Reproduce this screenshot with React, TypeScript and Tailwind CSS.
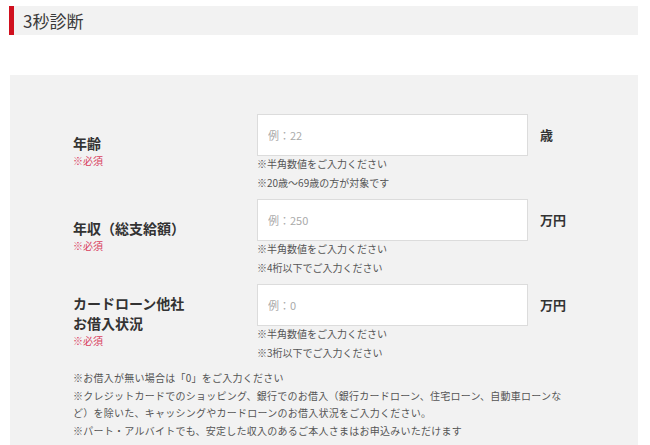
import React from "react";

type Row = {
  label: string[];
  placeholder: string;
  unit: string;
  notes: string[];
};

const rows: Row[] = [
  {
    label: ["年齢"],
    placeholder: "例：22",
    unit: "歳",
    notes: ["※半角数値をご入力ください", "※20歳～69歳の方が対象です"],
  },
  {
    label: ["年収（総支給額）"],
    placeholder: "例：250",
    unit: "万円",
    notes: ["※半角数値をご入力ください", "※4桁以下でご入力ください"],
  },
  {
    label: ["カードローン他社", "お借入状況"],
    placeholder: "例：0",
    unit: "万円",
    notes: ["※半角数値をご入力ください", "※3桁以下でご入力ください"],
  },
];

export default function App() {
  return (
    <div className="h-[445px] w-[650px] overflow-hidden bg-white font-['Noto_Sans_CJK_JP','Noto_Sans',sans-serif] text-[#333]">
      <div className="pl-[9px] pr-[12px] pt-[6px]">
        <h2 className="flex h-[29px] items-center border-l-[5px] border-[#d0101e] bg-[#f2f2f2] pl-[9px] text-[17px] font-normal text-[#3a3a3a]">
          3秒診断
        </h2>
      </div>

      <div className="ml-[10px] mr-[12px] mt-[40px] h-[400px] bg-[#f2f2f2] pl-[63px] pt-[39px]">
        <div className="flex flex-col gap-[5px]">
          {rows.map((r, i) => (
            <div key={i} className="flex items-center">
              <div className="w-[184px] pb-[7px]">
                <div className="text-[14px] font-bold leading-[20px] text-[#333]">
                  {r.label.map((l, j) => (
                    <div key={j}>{l}</div>
                  ))}
                </div>
                <div className="text-[10px] leading-[16px] text-[#d9405e]">※必須</div>
              </div>
              <div>
                <div className="flex items-center">
                  <input
                    readOnly
                    placeholder={r.placeholder}
                    className="h-[42px] w-[271px] border border-[#dcdcdc] bg-white px-[10px] text-[11px] text-[#333] outline-none placeholder:text-[#aaaaaa]"
                  />
                  <span className="ml-[12px] text-[13px] font-bold text-[#333]">{r.unit}</span>
                </div>
                <div className="-mt-[2px] mb-[2px] text-[10px] leading-[19px] text-[#555]">
                  {r.notes.map((n, j) => (
                    <div key={j}>{n}</div>
                  ))}
                </div>
              </div>
            </div>
          ))}
        </div>

        <div className="mt-[5px] w-[510px] text-[10px] leading-[17.5px] tracking-[0.25px] text-[#555]">
          <p>※お借入が無い場合は「0」をご入力ください</p>
          <p>
            ※クレジットカードでのショッピング、銀行でのお借入（銀行カードローン、住宅ローン、自動車ローンな
            <br />
            ど）を除いた、キャッシングやカードローンのお借入状況をご入力ください。
          </p>
          <p>※パート・アルバイトでも、安定した収入のあるご本人さまはお申込みいただけます</p>
        </div>
      </div>
    </div>
  );
}
